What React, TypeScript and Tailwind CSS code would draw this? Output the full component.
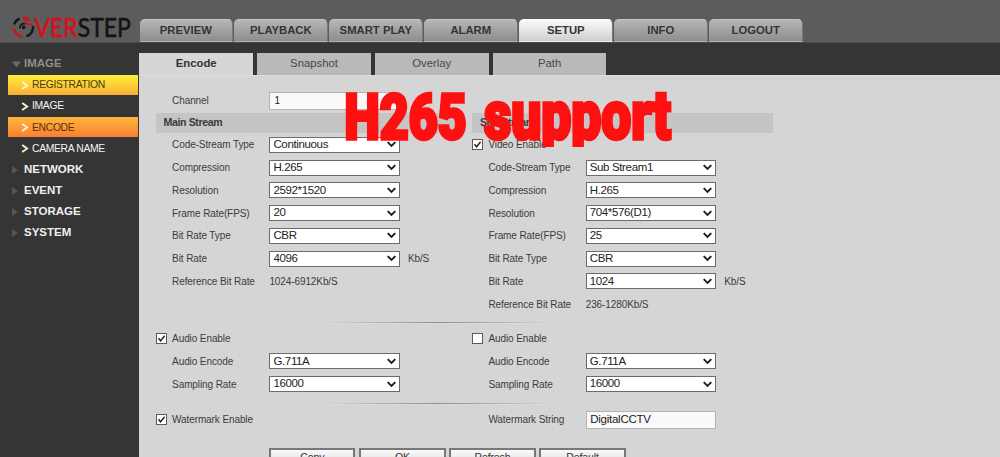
import type { ReactNode } from "react";

const navTabs = ["PREVIEW", "PLAYBACK", "SMART PLAY", "ALARM", "SETUP", "INFO", "LOGOUT"];
const subTabs = ["Encode", "Snapshot", "Overlay", "Path"];

function Logo() {
  return (
    <svg className="mt-[14px] ml-[12px] block h-[28px] w-[120px] shrink-0 overflow-visible" viewBox="0 0 120 28">
      <g fill="none" strokeWidth="2.4">
        <path d="M2.2 10.5A9.3 9.3 0 0 1 7.6 4.6" stroke="#141414" />
        <path d="M10.5 4A9.3 9.3 0 0 1 18 7" stroke="#d8101c" />
        <path d="M21 12A9.3 9.3 0 0 1 14.5 22.2" stroke="#141414" />
        <path d="M2 14.5A9.3 9.3 0 0 0 10.8 22.6" stroke="#d8101c" />
        <path d="M12.6 4.4L15.4 10.2L20.8 10.8" stroke="#d8101c" strokeWidth="1.5" />
        <path d="M13.2 9.9A4 4 0 0 0 8 14.6" stroke="#141414" strokeWidth="1.6" />
      </g>
      <circle cx="11.6" cy="13.4" r="1.8" fill="#141414" />
      <text x="22.5" y="23.2" textLength="43" lengthAdjust="spacingAndGlyphs" fill="#d8101c" className="font-['Lato'] text-[26.5px]" stroke="#d8101c" strokeWidth="0.7">VER</text>
      <text x="65.8" y="23.2" textLength="53" lengthAdjust="spacingAndGlyphs" fill="#141414" className="font-['Lato'] text-[26.5px]" stroke="#141414" strokeWidth="0.6">STEP</text>
    </svg>
  );
}

function MenuHeading({ label, open }: { label: string; open?: boolean }) {
  return (
    <div className={`flex h-[21.1px] items-center text-[11.5px] font-bold ${open ? "text-[#8e8e8e]" : "text-[#f0f0f0]"}`}>
      <svg className="ml-[11px] mr-[3px] h-[10px] w-[10px]" viewBox="0 0 10 10">
        <path d={open ? "M1 2.5h9L5.5 8.5z" : "M1 1l6 4-6 4z"} fill={open ? "#696969" : "#555"} />
      </svg>
      {label}
    </div>
  );
}

function MenuItem({ label, tone }: { label: string; tone?: "yellow" | "orange" }) {
  const look =
    tone === "yellow"
      ? "bg-linear-to-b from-[#fdf03a] to-[#f8ae36] text-[#4d3a10]"
      : tone === "orange"
        ? "bg-linear-to-b from-[#fdb83a] to-[#fb7c34] text-[#5a3010]"
        : "text-[#f4f4f4]";
  return (
    <div className="h-[21.1px] pt-[0.6px] pl-[8px]">
      <div className={`flex h-[20px] w-[130px] items-center text-[10.4px] tracking-[-0.35px] ${look}`}>
        <svg className="mt-px ml-[13px] mr-[3px] h-[9px] w-[8px]" viewBox="0 0 8 9">
          <path d="M1.2 1l5 3.5-5 3.5" fill="none" stroke="#fff6d8" strokeWidth="1.8" />
        </svg>
        <span className="whitespace-nowrap">{label}</span>
      </div>
    </div>
  );
}

function Select({ value }: { value: string }) {
  return (
    <div className="flex h-[16px] w-[130.5px] shrink-0 items-center justify-between border border-[#6b6b6b] bg-white pr-[3px] pl-[3px] text-[11.5px] leading-none tracking-[-0.35px] text-[#222]">
      <span>{value}</span>
      <svg className="h-[7px] w-[9px]" viewBox="0 0 9 7">
        <path d="M0.7 1.2L4.5 5L8.3 1.2" fill="none" stroke="#1c1c1c" strokeWidth="1.9" />
      </svg>
    </div>
  );
}

function Input({ value, small }: { value: string; small?: boolean }) {
  return (
    <div className={`flex h-[18px] w-[130.5px] shrink-0 items-center border border-[#b4b4b4] bg-[#f9f9f9] leading-none text-[#222] ${small ? "pl-[4px] text-[10px]" : "pl-[3.5px] text-[11.5px] tracking-[-0.25px]"}`}>
      {value}
    </div>
  );
}

function Row({ label, children, unit }: { label: string; children?: ReactNode; unit?: string }) {
  return (
    <div className="flex h-[22.75px] items-center pl-[16px]">
      <span className="w-[97.3px] shrink-0 whitespace-nowrap">{label}</span>
      {children}
      {unit && <span className="ml-[8px]">{unit}</span>}
    </div>
  );
}

function Check({ label, on }: { label: string; on?: boolean }) {
  return (
    <div className="flex h-[22.75px] items-center">
      <svg className="mr-[5px] block h-[11px] w-[11px] shrink-0" viewBox="0 0 11 11">
        <rect x="0.5" y="0.5" width="10" height="10" fill="#fff" stroke="#5a5a5a" />
        {on && <path d="M2.5 5.2l2.1 2.6L8.6 2.8" fill="none" stroke="#222" strokeWidth="1.4" />}
      </svg>
      <span className="whitespace-nowrap">{label}</span>
    </div>
  );
}

function SectionTitle({ label }: { label: string }) {
  return (
    <div className="mb-[1px] flex h-[19.7px] w-[301px] items-center bg-[#c5c5c5] pl-[7.5px] text-[10.6px] font-bold tracking-[-0.4px] text-[#3a3a3a]">
      {label}
    </div>
  );
}

function Divider() {
  return <div className="ml-[167px] h-[2px] w-[232px] border-b border-[#dadada] bg-linear-to-r from-transparent via-[#8f8f8f] to-transparent" />;
}

export default function App() {
  return (
    <div className="relative flex h-[457px] w-[1000px] flex-col overflow-hidden bg-[#353535] font-['Liberation_Sans',Arial,sans-serif]">
      <header className="flex h-[42.5px] shrink-0 border-b border-[#4a4a4a] bg-[#5c5c5c]">
        <Logo />
        <nav className="mt-[19px] ml-[7.5px] flex gap-[1.3px]">
          {navTabs.map((t) => (
            <div
              key={t}
              className={`flex h-[23px] w-[93.7px] items-center justify-center rounded-t-[5px] border-r border-b border-t border-r-[#777] text-[11.3px] font-bold whitespace-nowrap text-[#343434] ${
                t === "SETUP"
                  ? "border-t-white border-b-[#eee] bg-linear-to-b from-[#fafafa] to-[#cfcfcf]"
                  : "border-t-[#c4c4c4] border-b-[#b0b0b0] bg-linear-to-b from-[#b6b6b6] to-[#8f8d8d]"
              }`}
            >
              {t}
            </div>
          ))}
        </nav>
      </header>

      <div className="flex min-h-0 flex-1">
        <aside className="w-[139.3px] shrink-0 pt-[11px]">
          <MenuHeading label="IMAGE" open />
          <MenuItem label="REGISTRATION" tone="yellow" />
          <MenuItem label="IMAGE" />
          <MenuItem label="ENCODE" tone="orange" />
          <MenuItem label="CAMERA NAME" />
          <MenuHeading label="NETWORK" />
          <MenuHeading label="EVENT" />
          <MenuHeading label="STORAGE" />
          <MenuHeading label="SYSTEM" />
        </aside>

        <div className="flex flex-1 flex-col pt-[10.5px]">
          <div className="flex h-[21.5px] shrink-0 gap-[4px]">
            {subTabs.map((t, i) => (
              <div
                key={t}
                className={`flex w-[113.8px] items-center justify-center text-[11.3px] ${
                  i === 0 ? "bg-[#d6d6d6] font-bold text-[#333]" : "bg-[#b9b9b9] text-[#484848]"
                }`}
              >
                {t}
              </div>
            ))}
          </div>

          <main className="flex-1 border-t border-[#dcdcdc] bg-[#d5d5d5] pt-[14px] pl-[16.8px] text-[10px] tracking-[-0.1px] text-[#3c3c3c]">
            <Row label="Channel">
              <Input value="1" small />
            </Row>
            <div className="mt-[0.6px] flex h-[202px] gap-[14.3px]">
              <section className="w-[302px]">
                <SectionTitle label="Main Stream" />
                <Row label="Code-Stream Type"><Select value="Continuous" /></Row>
                <Row label="Compression"><Select value="H.265" /></Row>
                <Row label="Resolution"><Select value="2592*1520" /></Row>
                <Row label="Frame Rate(FPS)"><Select value="20" /></Row>
                <Row label="Bit Rate Type"><Select value="CBR" /></Row>
                <Row label="Bit Rate" unit="Kb/S"><Select value="4096" /></Row>
                <Row label="Reference Bit Rate">1024-6912Kb/S</Row>
              </section>
              <section className="w-[302px]">
                <SectionTitle label="Sub Stream" />
                <Check label="Video Enable" on />
                <Row label="Code-Stream Type"><Select value="Sub Stream1" /></Row>
                <Row label="Compression"><Select value="H.265" /></Row>
                <Row label="Resolution"><Select value="704*576(D1)" /></Row>
                <Row label="Frame Rate(FPS)"><Select value="25" /></Row>
                <Row label="Bit Rate Type"><Select value="CBR" /></Row>
                <Row label="Bit Rate" unit="Kb/S"><Select value="1024" /></Row>
                <Row label="Reference Bit Rate">236-1280Kb/S</Row>
              </section>
            </div>
            <div className="mt-[7.5px]"><Divider /></div>
            <div className="mt-[3px] flex gap-[14.3px]">
              <section className="w-[302px]">
                <Check label="Audio Enable" on />
                <Row label="Audio Encode"><Select value="G.711A" /></Row>
                <Row label="Sampling Rate"><Select value="16000" /></Row>
              </section>
              <section className="w-[302px]">
                <Check label="Audio Enable" />
                <Row label="Audio Encode"><Select value="G.711A" /></Row>
                <Row label="Sampling Rate"><Select value="16000" /></Row>
              </section>
            </div>
            <div className="mt-[7px]"><Divider /></div>
            <div className="mt-[4px] flex gap-[14.3px]">
              <section className="w-[302px]"><Check label="Watermark Enable" on /></section>
              <section className="w-[302px]">
                <Row label="Watermark String"><Input value="DigitalCCTV" /></Row>
              </section>
            </div>
            <div className="mt-[17px] flex gap-[3.7px] pl-[113px]">
              {["Copy", "OK", "Refresh", "Default"].map((b) => (
                <div key={b} className="flex h-[20px] w-[86.4px] items-center justify-center border-2 border-[#777] bg-linear-to-b from-[#fafafa] to-[#d8d8d8] text-[10.5px] text-[#333]">
                  {b}
                </div>
              ))}
            </div>
          </main>
        </div>
      </div>

      <svg className="absolute top-[82px] left-[335px] h-[65px] w-[345px]" viewBox="0 0 345 65">
        <g fill="#ff1010" stroke="#ff1010" strokeWidth="3.5" className="font-['Roboto'] font-black" transform="scale(2 1)">
          <text x="4.8" y="57.3" textLength="61" lengthAdjust="spacingAndGlyphs" className="text-[62px]">H265</text>
          <text x="74.5" y="57.3" textLength="93.5" lengthAdjust="spacingAndGlyphs" className="text-[69px]">support</text>
        </g>
      </svg>
    </div>
  );
}
